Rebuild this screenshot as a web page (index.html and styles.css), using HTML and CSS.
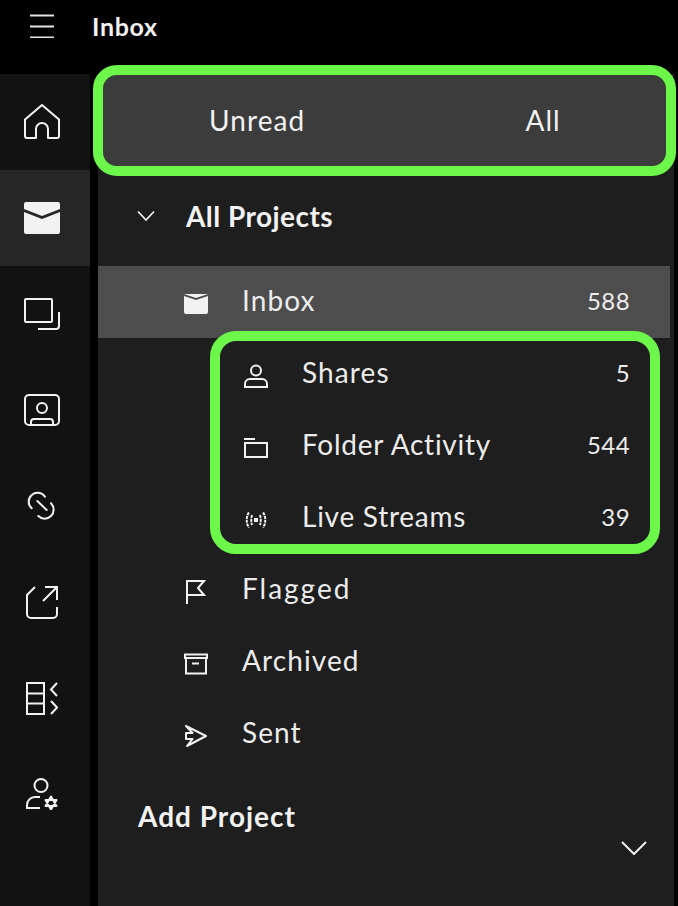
FILE: index.html
```html
<!DOCTYPE html>
<html lang="en">
<head>
<meta charset="utf-8">
<title>Inbox</title>
<link rel="stylesheet" href="styles.css">
</head>
<body>
<header class="topbar">
  <svg class="burger" width="24" height="24" viewBox="0 0 24 24"><path d="M0 1.500H24M0 12.500H24M0 23.500H24"/></svg>
  <h1 class="title">Inbox</h1>
</header>
<div class="body">
  <nav class="rail">
    <div class="rail-item"><svg class="ic" width="36" height="36" viewBox="0 0 36 36"><path d="M1 15.500 18 1 35 15.500V32a2 2 0 0 1-2 2H24V25a6 6 0 0 0-12 0V34H3a2 2 0 0 1-2-2Z" stroke-linejoin="round"/></svg></div>
    <div class="rail-item active"><svg width="36" height="32" viewBox="0 0 36 32"><path class="fill" d="M2 0H34a2 2 0 0 1 2 2V7L18 14 0 7V2a2 2 0 0 1 2-2ZM0 10 18 17 36 10V30a2 2 0 0 1-2 2H2a2 2 0 0 1-2-2Z"/></svg></div>
    <div class="rail-item"><svg class="ic" width="36" height="33" viewBox="0 0 36 33"><rect x="1" y="1" width="27" height="23" rx="1"/><path d="M14 31H32a3 3 0 0 0 3-3V14"/></svg></div>
    <div class="rail-item"><svg class="ic" width="36" height="32" viewBox="0 0 36 32"><rect x="1" y="1" width="34" height="30" rx="4"/><circle cx="18" cy="14" r="5"/><path d="M7 31V28a3 3 0 0 1 3-3H26a3 3 0 0 1 3 3V31"/></svg></div>
    <div class="rail-item"><svg class="ic" width="30" height="30" viewBox="0 0 30 30"><path d="M4.700 17.300A8.900 8.900 0 1 1 18 5.700M24 12.300A8.700 8.700 0 1 1 11.300 25M10.300 10 19.700 19" stroke-linecap="round"/></svg></div>
    <div class="rail-item"><svg class="ic" width="32" height="33" viewBox="0 0 32 33"><path d="M9 1 1 9V28a4 4 0 0 0 4 4H27a4 4 0 0 0 4-4V21M19 1H31V14M31 1 17 15"/></svg></div>
    <div class="rail-item"><svg class="ic" width="32" height="33" viewBox="0 0 32 33"><path d="M1 1H18V32H1ZM1 11.500H18M1 21.500H18M31 1 25 7.500 31 14M25 19 31 25.500 25 32"/></svg></div>
    <div class="rail-item"><svg class="ic" width="32" height="32" viewBox="0 0 32 32"><circle cx="15" cy="7.500" r="6.500"/><path d="M14 19H9a8 8 0 0 0-8 8V30H14"/><path class="gear" d="M25 18.500 30.500 28H19.500ZM25 31.500 19.500 22H30.500Z" stroke-linejoin="round"/></svg></div>
  </nav>
  <main class="panel">
    <div class="segment">
      <span class="tab tab-unread">Unread</span>
      <span class="tab tab-all">All</span>
    </div>
    <div class="heading">
      <svg class="ic thin" width="20" height="12" viewBox="0 0 20 12"><path d="M2 1.500 10 10 18 1.500"/></svg>
      <span>All Projects</span>
    </div>
    <div class="row selected">
      <div class="icon-box"><svg width="24" height="20" viewBox="0 0 24 20"><path class="fill" d="M0 2 12 6 24 2V18a2 2 0 0 1-2 2H2a2 2 0 0 1-2-2ZM0 0H24L12 4Z"/></svg></div>
      <span class="label">Inbox</span><span class="count">588</span>
    </div>
    <div class="sub">
      <div class="ring"></div>
      <div class="row nested">
        <div class="icon-box"><svg class="ic" width="24" height="24" viewBox="0 0 24 24"><circle cx="12" cy="6.500" r="5"/><path d="M1 23V20a5 5 0 0 1 5-5H18a5 5 0 0 1 5 5V23Z"/></svg></div>
        <span class="label">Shares</span><span class="count">5</span>
      </div>
      <div class="row nested">
        <div class="icon-box"><svg class="ic" width="24" height="20" viewBox="0 0 24 20"><path d="M0 1H11M1 5H23V19H1Z"/></svg></div>
        <span class="label label-tight">Folder Activity</span><span class="count">544</span>
      </div>
      <div class="row nested">
        <div class="icon-box"><svg class="ic live" width="24" height="18" viewBox="0 0 24 18"><path d="M5 1.500C2 5 2 13 5 16.500M19 1.500C22 5 22 13 19 16.500M8 4C7 7 7 11 8 14M16 4C17 7 17 11 16 14" stroke-dasharray="3 .8"/><rect class="fill" x="10" y="7" width="4" height="4"/></svg></div>
        <span class="label label-tight">Live Streams</span><span class="count">39</span>
      </div>
    </div>
    <div class="row">
      <div class="icon-box"><svg class="ic" width="22" height="24" viewBox="0 0 22 24"><path d="M3 24V1H20L14 8 20 15H3"/></svg></div>
      <span class="label label-wide">Flagged</span>
    </div>
    <div class="row">
      <div class="icon-box"><svg class="ic" width="24" height="22" viewBox="0 0 24 22"><path d="M0 1.500H24M1 1V5H23V1M2 5V20.500H22V5M8 10.500H15"/></svg></div>
      <span class="label">Archived</span>
    </div>
    <div class="row">
      <div class="icon-box"><svg class="ic plane" width="24" height="22" viewBox="0 0 24 22"><path d="M2 1 22 11 3 21 8.500 14H2V8H8.500Z" stroke-linejoin="round"/></svg></div>
      <span class="label">Sent</span>
    </div>
    <div class="add">Add Project</div>
    <div class="add-toggle"><svg class="ic" width="26" height="14" viewBox="0 0 26 14"><path d="M1 1 13 13 25 1"/></svg></div>
  </main>
</div>
</body>
</html>
```
FILE: styles.css
```css
* { box-sizing: border-box; }
html, body { margin: 0; height: 906px; overflow: hidden; }
body {
  background: #000;
  color: #f2f2f2;
  font-family: "Lato", "Liberation Sans", sans-serif;
}
svg { display: block; flex: none; }
.ic { fill: none; stroke: #f2f2f2; stroke-width: 2; }
.ic.thin { stroke-width: 1.7; }
.ic.plane { stroke-width: 2; }
.ic.live { stroke-width: 2; }
.ic .gear { stroke-width: 2; }
.ic .fill, .fill { fill: #f2f2f2; stroke: none; }

.topbar {
  height: 74px;
  display: flex;
  align-items: flex-start;
  padding: 14px 0 0 30px;
  gap: 38px;
}
.burger { stroke: #e4e4e4; stroke-width: 2; fill: none; }
.title { margin: 0; font-size: 25px; line-height: 25px; font-weight: 700; letter-spacing: .7px; }

.body { display: flex; height: 832px; }
.rail { width: 90px; background: #121212; margin-right: 8px; }
.rail-item { height: 96px; display: flex; align-items: center; justify-content: center; padding-right: 6px; }
.rail-item.active { background: #262626; }

.panel { width: 576px; background: #1e1e1e; position: relative; }
.segment {
  height: 91px;
  margin: 1px 0 0 5px;
  width: 563px;
  padding-bottom: 2px;
  background: #3c3c3c;
  border-radius: 14px;
  outline: 10px solid #6df74b;
  display: flex;
  align-items: center;
  font-size: 28px;
  letter-spacing: 1.1px;
}
.tab-unread { margin-left: 106px; }
.tab-all { margin-left: 220px; }

.heading {
  height: 100px;
  display: flex;
  align-items: center;
  padding: 0 0 0 38px;
  gap: 30px;
  font-size: 28px;
  font-weight: 700;
  letter-spacing: .45px;
}

.row {
  width: 572px;
  height: 72px;
  display: flex;
  align-items: center;
  padding: 0 40px 4px 86px;
  font-size: 28px;
  letter-spacing: 1.1px;
  color: #ececec;
}
.row.selected { background: #4d4d4d; }
.row.nested { padding-left: 146px; }
.icon-box { width: 58px; flex: none; margin-top: 8px; }
.label-tight { letter-spacing: .75px; }
.label-wide { letter-spacing: 2px; }
.count { margin-left: auto; font-size: 24px; letter-spacing: .4px; }

.sub { position: relative; width: 572px; }
.ring {
  position: absolute;
  left: 112px;
  top: -7px;
  width: 450px;
  height: 223px;
  border: 10px solid #6df74b;
  border-radius: 26px;
  pointer-events: none;
}

.add {
  margin: 28px 0 0 40px;
  font-size: 28px;
  font-weight: 700;
  letter-spacing: 1px;
  line-height: 36px;
}
.add-toggle { position: absolute; left: 523px; top: 767px; }
```
